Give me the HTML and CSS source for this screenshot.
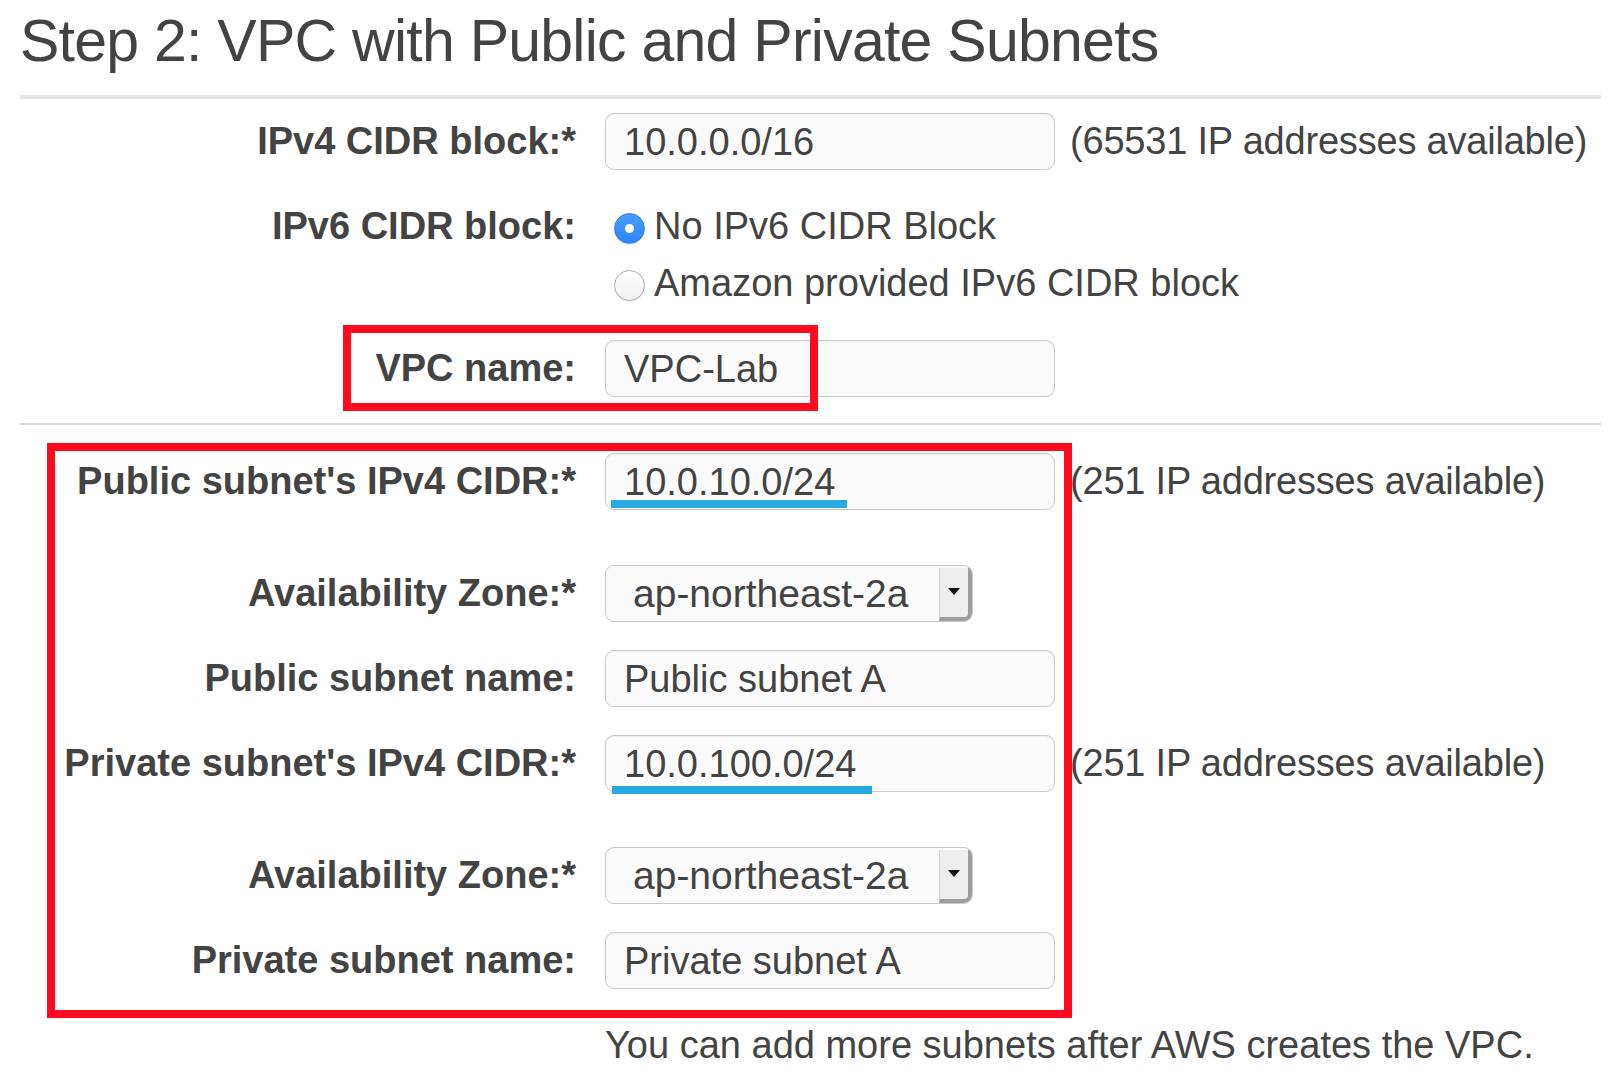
FILE: index.html
```html
<!DOCTYPE html>
<html lang="en">
<head>
<meta charset="utf-8">
<title>Step 2: VPC with Public and Private Subnets</title>
<link rel="stylesheet" href="styles.css">
</head>
<body>
<div class="page">
  <h1 class="title">Step 2: VPC with Public and Private Subnets</h1>
  <div class="rule rule-thick"></div>

  <div class="form form-vpc">
    <div class="row">
      <div class="label">IPv4 CIDR block:*</div>
      <div class="control">
        <div class="field">10.0.0.0/16</div>
        <span class="note">(65531 IP addresses available)</span>
      </div>
    </div>
    <div class="row row-radios">
      <div class="label">IPv6 CIDR block:</div>
      <div class="control radios">
        <div class="radio-opt"><span class="radio radio-on"></span><span>No IPv6 CIDR Block</span></div>
        <div class="radio-opt"><span class="radio"></span><span>Amazon provided IPv6 CIDR block</span></div>
      </div>
    </div>
    <div class="row">
      <div class="label">VPC name:</div>
      <div class="control">
        <div class="field">VPC-Lab</div>
      </div>
    </div>
  </div>

  <div class="rule rule-thin"></div>

  <div class="form form-subnets">
    <div class="row row-cidr">
      <div class="label">Public subnet's IPv4 CIDR:*</div>
      <div class="control">
        <div class="field">10.0.10.0/24<span class="mark mark-public"></span></div>
        <span class="note">(251 IP addresses available)</span>
      </div>
    </div>
    <div class="row">
      <div class="label">Availability Zone:*</div>
      <div class="control">
        <div class="select"><span class="select-text">ap-northeast-2a</span><span class="select-btn"><span class="arrow"></span></span></div>
      </div>
    </div>
    <div class="row">
      <div class="label">Public subnet name:</div>
      <div class="control">
        <div class="field">Public subnet A</div>
      </div>
    </div>
    <div class="row row-cidr">
      <div class="label">Private subnet's IPv4 CIDR:*</div>
      <div class="control">
        <div class="field">10.0.100.0/24<span class="mark mark-private"></span></div>
        <span class="note">(251 IP addresses available)</span>
      </div>
    </div>
    <div class="row">
      <div class="label">Availability Zone:*</div>
      <div class="control">
        <div class="select"><span class="select-text">ap-northeast-2a</span><span class="select-btn"><span class="arrow"></span></span></div>
      </div>
    </div>
    <div class="row">
      <div class="label">Private subnet name:</div>
      <div class="control">
        <div class="field">Private subnet A</div>
      </div>
    </div>
    <div class="row">
      <div class="label"></div>
      <div class="control">
        <span class="hint">You can add more subnets after AWS creates the VPC.</span>
      </div>
    </div>
  </div>

  <div class="annot annot-vpc"></div>
  <div class="annot annot-subnets"></div>
</div>
</body>
</html>
```

FILE: styles.css
```css
html, body {
  margin: 0;
  padding: 0;
  background: #ffffff;
}

body {
  font-family: "Liberation Sans", Arial, Helvetica, sans-serif;
  color: #434343;
  font-size: 38px;
  overflow: hidden;
}

.page {
  position: relative;
  width: 1622px;
  height: 1080px;
}

.title {
  margin: 5px 0 0 20px;
  font-size: 59px;
  line-height: 72px;
  font-weight: 400;
  letter-spacing: -0.75px;
  color: #434343;
}

.rule {
  margin-left: 20px;
  width: 1581px;
}

.rule-thick {
  margin-top: 18px;
  height: 4px;
  background: #e5e5e5;
}

.rule-thin {
  margin-top: 26px;
  height: 2px;
  background: #dcdcdc;
}

.form {
  display: flex;
  flex-direction: column;
  gap: 28px;
}

.form-vpc {
  margin-top: 14px;
}

.form-subnets {
  margin-top: 28px;
}

.row {
  display: grid;
  grid-template-columns: 576px 1fr;
  column-gap: 29px;
  align-items: start;
  height: 57px;
}

.row-radios {
  height: auto;
}

.row-cidr {
  margin-bottom: 27px;
}

.label {
  text-align: right;
  font-weight: 700;
  line-height: 57px;
  white-space: nowrap;
}

.control {
  display: flex;
  align-items: center;
  gap: 15px;
  line-height: 57px;
}

.field {
  position: relative;
  box-sizing: border-box;
  width: 450px;
  height: 57px;
  padding-left: 18px;
  border: 1px solid #cbcbcb;
  border-radius: 9px;
  background: #fbfbfb;
  box-shadow: inset 0 1px 2px rgba(0, 0, 0, 0.05);
  line-height: 56px;
  white-space: nowrap;
}

.note {
  white-space: nowrap;
  letter-spacing: -0.2px;
}

.hint {
  white-space: nowrap;
}

.mark {
  position: absolute;
  height: 8px;
  background: #27aae1;
}

.mark-public {
  left: 5px;
  top: 46px;
  width: 236px;
}

.mark-private {
  left: 6px;
  top: 50px;
  width: 260px;
}

.radios {
  flex-direction: column;
  align-items: flex-start;
  gap: 0;
}

.radio-opt {
  display: flex;
  align-items: center;
  height: 57px;
  line-height: 57px;
  white-space: nowrap;
}

.radio {
  box-sizing: border-box;
  width: 31px;
  height: 31px;
  margin: 4px 9px 0 9px;
  border-radius: 50%;
  border: 1px solid #adadad;
  background: linear-gradient(#ffffff, #f1f1f1);
  box-shadow: 0 1px 1px rgba(0, 0, 0, 0.1);
  flex: none;
  position: relative;
}

.radio-on {
  border: 1px solid #2f7fe6;
  background: linear-gradient(#4a9dfb, #2e86f6);
}

.radio-on::after {
  content: "";
  position: absolute;
  left: 50%;
  top: 50%;
  width: 9px;
  height: 9px;
  margin: -4.5px 0 0 -4.5px;
  border-radius: 50%;
  background: #ffffff;
}

.select {
  box-sizing: border-box;
  display: flex;
  width: 368px;
  height: 57px;
  border: 1px solid #c9c9c9;
  border-radius: 9px;
  background: #fbfbfb;
  overflow: hidden;
}

.select-text {
  flex: 1;
  padding-left: 27px;
  font-size: 39px;
  line-height: 56px;
  white-space: nowrap;
}

.select-btn {
  box-sizing: border-box;
  width: 33px;
  margin-top: 2px;
  display: flex;
  justify-content: center;
  align-items: flex-start;
  padding-top: 20px;
  background: #eeeeee;
  border-left: 1px solid #d2d2d2;
  border-right: 4px solid #9d9d9d;
  border-bottom: 4px solid #9d9d9d;
  border-bottom-right-radius: 8px;
}

.arrow {
  width: 0;
  height: 0;
  border-left: 6px solid transparent;
  border-right: 6px solid transparent;
  border-top: 7px solid #111111;
}

.annot {
  position: absolute;
  box-sizing: border-box;
  border: 8px solid #ff0a1e;
  pointer-events: none;
}

.annot-vpc {
  left: 343px;
  top: 320px;
  width: 475px;
  height: 86px;
}

.annot-subnets {
  left: 47px;
  top: 438px;
  width: 1025px;
  height: 575px;
}
```
